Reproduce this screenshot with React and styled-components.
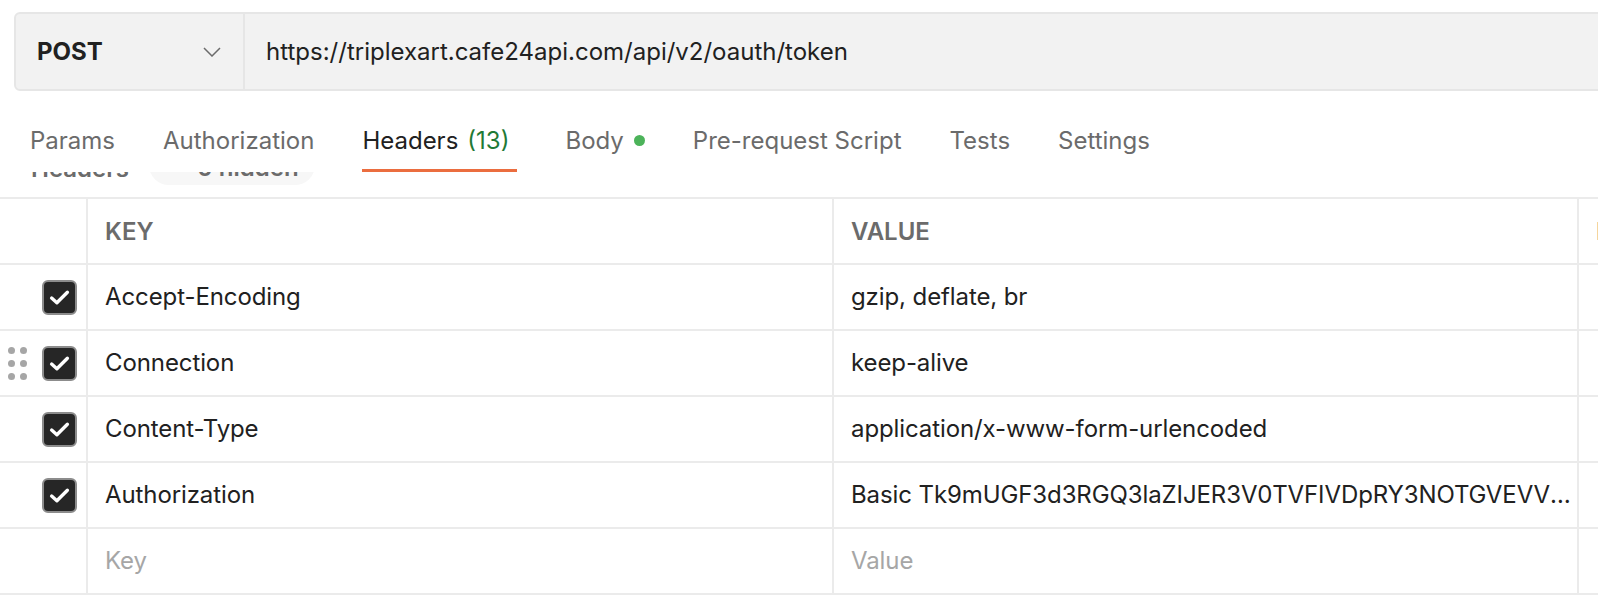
import React from 'react'
import styled, { createGlobalStyle } from 'styled-components'

const GlobalStyle = createGlobalStyle`
  html, body {
    margin: 0;
    padding: 0;
    background: #ffffff;
    overflow: hidden;
  }
  body {
    font-family: Inter, "Noto Sans", "Liberation Sans", sans-serif;
    color: #212121;
    -webkit-font-smoothing: antialiased;
  }
`

const tabs = [
  { label: 'Params' },
  { label: 'Authorization' },
  { label: 'Headers', count: '(13)', active: true },
  { label: 'Body', dot: true },
  { label: 'Pre-request Script' },
  { label: 'Tests' },
  { label: 'Settings' },
]

const headers = [
  { key: 'Accept-Encoding', value: 'gzip, deflate, br' },
  { key: 'Connection', value: 'keep-alive', handle: true },
  { key: 'Content-Type', value: 'application/x-www-form-urlencoded' },
  {
    key: 'Authorization',
    value: 'Basic Tk9mUGF3d3RGQ3laZIJER3V0TVFIVDpRY3NOTGVEVVZ2JhcWQ0ZHRIYQ==',
  },
]

const App = () => {
  return (
    <Page>
      <GlobalStyle />
      <UrlBar>
        <Method>
          <MethodName>POST</MethodName>
          <svg width="18" height="10" viewBox="0 0 18 10" fill="none">
            <polyline points="1,1 9,9 17,1" stroke="#6b6b6b" strokeWidth="1.5" />
          </svg>
        </Method>
        <UrlText>https://triplexart.cafe24api.com/api/v2/oauth/token</UrlText>
      </UrlBar>

      <TabBar>
        {tabs.map((t) => (
          <Tab key={t.label} active={t.active}>
            {t.label}
            {t.count && <Count>{t.count}</Count>}
            {t.dot && <Dot />}
          </Tab>
        ))}
      </TabBar>

      <HiddenRow>
        <HiddenLabel>Headers</HiddenLabel>
        <HiddenPill>
          <svg width="16" height="16" viewBox="0 0 16 16" fill="none">
            <circle cx="8" cy="8" r="6" stroke="#6b6b6b" strokeWidth="1.5" />
          </svg>
          <span>0 hidden</span>
        </HiddenPill>
      </HiddenRow>

      <Table>
        <Row>
          <CheckCell />
          <HeadCell>KEY</HeadCell>
          <HeadCell>VALUE</HeadCell>
          <HeadCell>DESCRIPTION</HeadCell>
        </Row>
        {headers.map((h) => (
          <Row key={h.key}>
            <CheckCell>
              <Handle show={h.handle}>
                {Array.from({ length: 6 }).map((_, i) => (
                  <span key={i} />
                ))}
              </Handle>
              <Checkbox>
                <svg width="21" height="17" viewBox="0 0 20 16" fill="none">
                  <polyline
                    points="2.5,8.5 7.5,13 17.5,3"
                    stroke="#ffffff"
                    strokeWidth="3.2"
                    strokeLinecap="round"
                    strokeLinejoin="round"
                  />
                </svg>
              </Checkbox>
            </CheckCell>
            <Cell>{h.key}</Cell>
            <Cell>{h.value}</Cell>
            <Cell />
          </Row>
        ))}
        <Row>
          <CheckCell />
          <Cell placeholder>Key</Cell>
          <Cell placeholder>Value</Cell>
          <Cell placeholder />
        </Row>
      </Table>
    </Page>
  )
}

export default App

const Page = styled.div`
  width: 1598px;
  height: 606px;
  overflow: hidden;
  padding-top: 12px;
  box-sizing: border-box;
`

const UrlBar = styled.div`
  display: flex;
  margin-left: 14px;
  margin-right: -20px;
  height: 79px;
  box-sizing: border-box;
  background: #f2f2f2;
  border: 2px solid #e6e6e6;
  border-radius: 6px;
`

const Method = styled.div`
  width: 229px;
  flex-shrink: 0;
  display: flex;
  align-items: center;
  justify-content: space-between;
  padding: 0 22px 0 21px;
  box-sizing: border-box;
  border-right: 2px solid #e6e6e6;
`

const MethodName = styled.span`
  font-size: 24px;
  font-weight: 700;
  color: #212121;
`

const UrlText = styled.div`
  display: flex;
  align-items: center;
  padding-left: 21px;
  font-size: 24px;
  color: #212121;
`

const TabBar = styled.div`
  position: relative;
  z-index: 1;
  background: #ffffff;
  display: flex;
  gap: 48px;
  padding: 0 30px;
  margin-top: 14px;
`

const Tab = styled.div`
  display: flex;
  align-items: center;
  height: 67px;
  padding-top: 6px;
  padding-right: ${(p) => (p.active ? '8px' : '0')};
  box-sizing: border-box;
  font-size: 24px;
  color: ${(p) => (p.active ? '#212121' : '#6b6b6b')};
  border-bottom: 3px solid ${(p) => (p.active ? '#eb6d3f' : 'transparent')};
  white-space: nowrap;
`

const Count = styled.span`
  margin-left: 9px;
  color: #1f7a36;
`

const Dot = styled.span`
  width: 11px;
  height: 11px;
  border-radius: 50%;
  background: #4cb35a;
  margin-left: 10px;
  margin-top: 1px;
`

const HiddenRow = styled.div`
  display: flex;
  align-items: center;
  gap: 20px;
  height: 40px;
  margin-top: -27px;
  padding-left: 31px;
`

const HiddenLabel = styled.span`
  font-size: 24px;
  font-weight: 600;
  color: #6b6b6b;
  padding-top: 6px;
`

const HiddenPill = styled.div`
  display: flex;
  align-items: center;
  gap: 16px;
  height: 40px;
  padding: 0 16px;
  border-radius: 20px;
  background: #f7f7f7;
  font-size: 24px;
  font-weight: 600;
  color: #6b6b6b;
  span {
    padding-top: 4px;
  }
`

const Table = styled.div`
  margin-top: 12px;
  border-top: 2px solid #ebebeb;
`

const Row = styled.div`
  display: grid;
  grid-template-columns: 88px 746px 745px 300px;
  height: 66px;
  box-sizing: border-box;
  border-bottom: 2px solid #ebebeb;
`

const Cell = styled.div`
  display: block;
  padding: 0 0 0 17px;
  min-width: 0;
  border-right: 2px solid #ebebeb;
  font-size: 24px;
  letter-spacing: -0.1px;
  line-height: 64px;
  color: ${(p) => (p.placeholder ? '#a6a6a6' : '#212121')};
  white-space: nowrap;
  overflow: hidden;
  text-overflow: ellipsis;
`

const HeadCell = styled(Cell)`
  font-weight: 600;
  letter-spacing: 0;
  color: #6b6b6b;
  padding-top: 1px;
`

const CheckCell = styled.div`
  display: flex;
  align-items: center;
  justify-content: space-between;
  padding: 0 9px 0 8px;
  border-right: 2px solid #ebebeb;
`

const Handle = styled.div`
  display: grid;
  grid-template-columns: 6px 6px;
  gap: 6px 6px;
  visibility: ${(p) => (p.show ? 'visible' : 'hidden')};
  span {
    width: 7px;
    height: 7px;
    border-radius: 50%;
    background: #a6a6a6;
  }
`

const Checkbox = styled.div`
  width: 35px;
  height: 35px;
  box-sizing: border-box;
  border-radius: 6px;
  background: #262626;
  border: 2px solid #8c8c8c;
  display: flex;
  align-items: center;
  justify-content: center;
`
